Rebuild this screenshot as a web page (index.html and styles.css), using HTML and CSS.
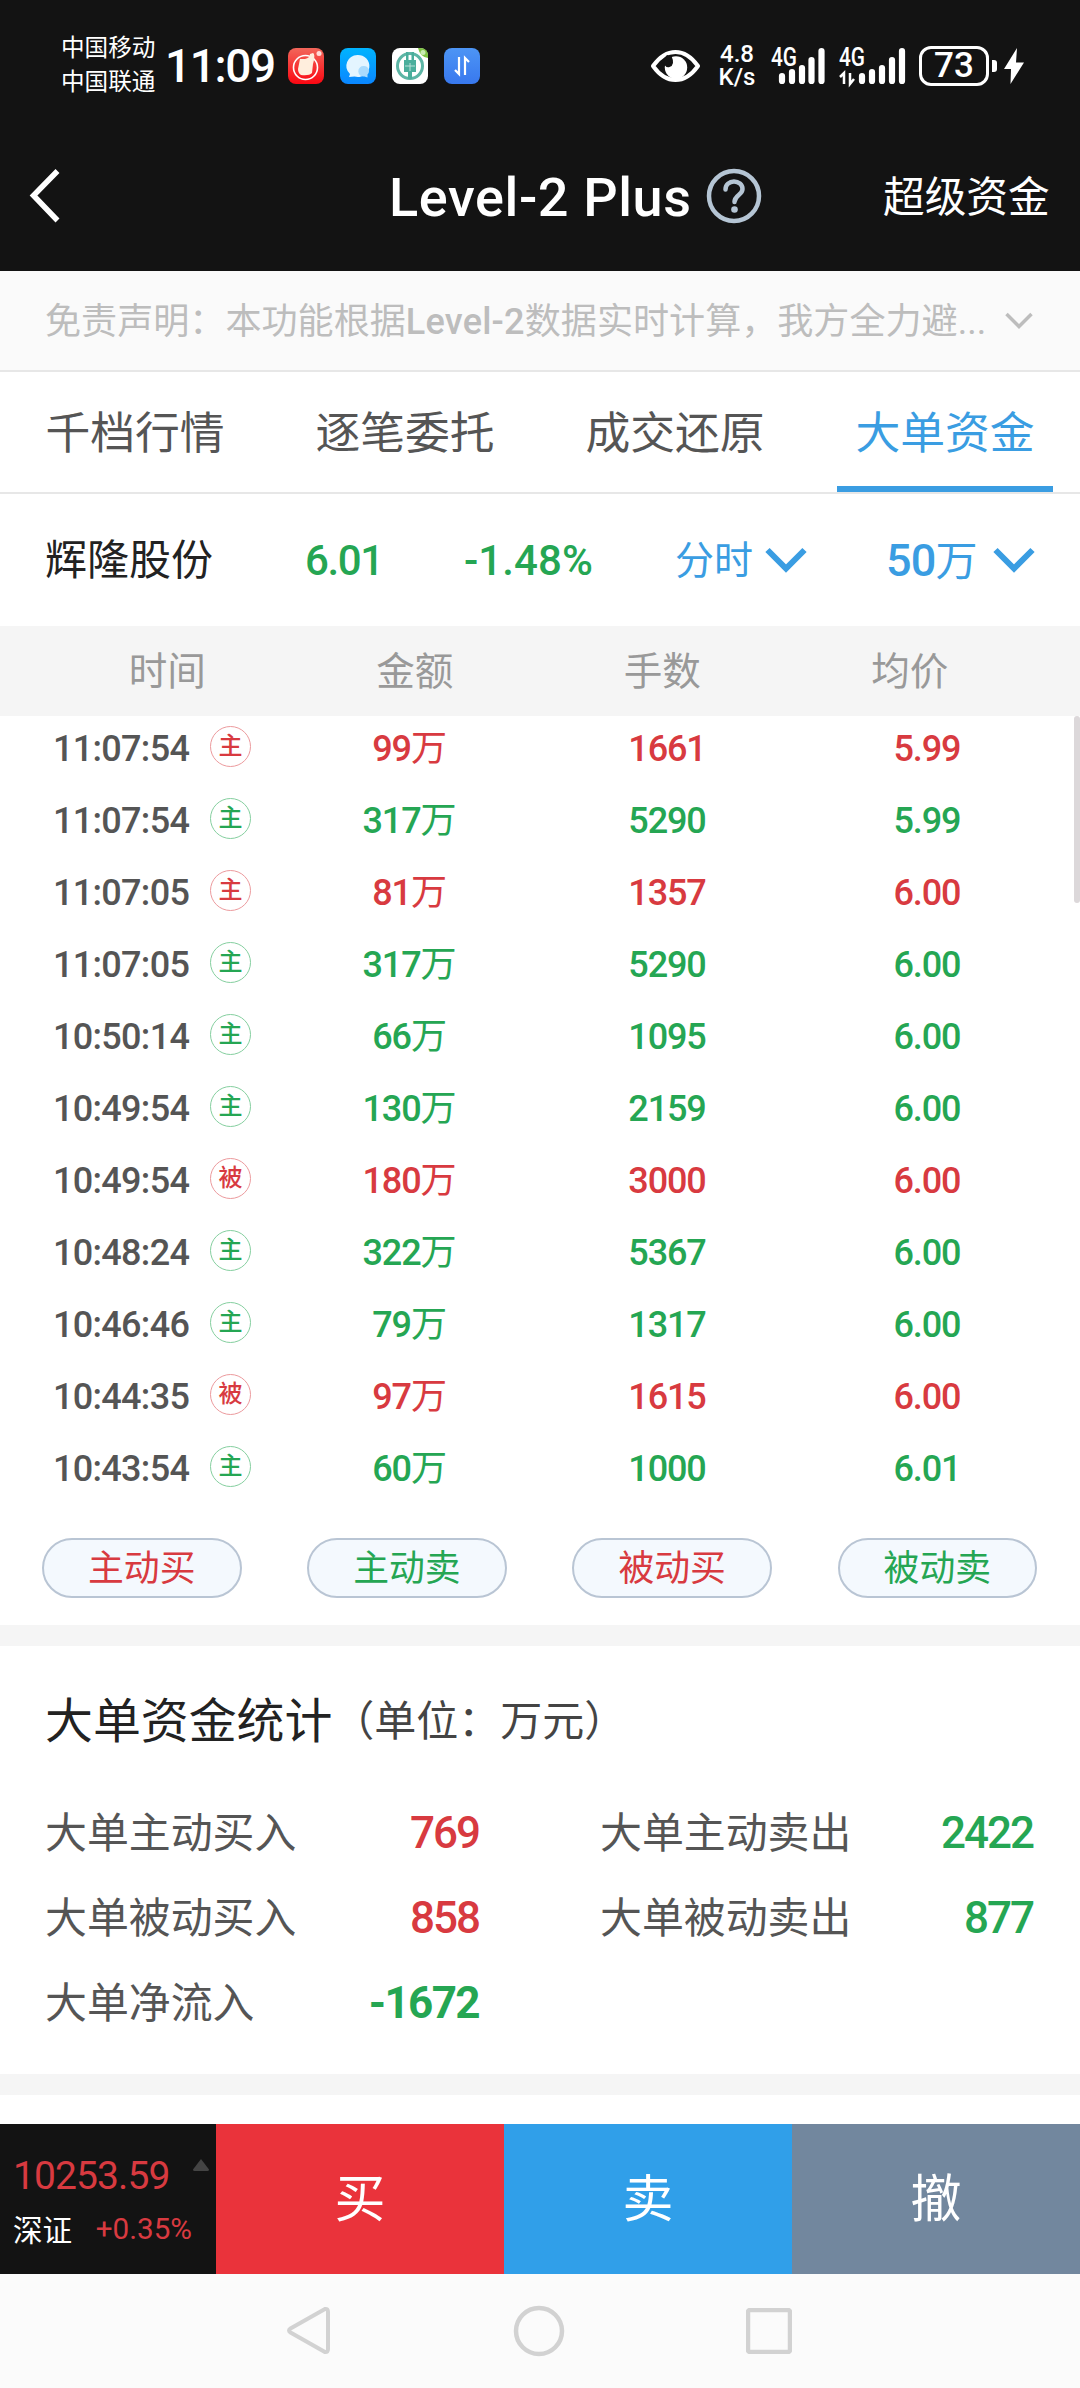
FILE: index.html
```html
<!DOCTYPE html>
<html lang="zh-CN">
<head>
<meta charset="utf-8">
<title>Level-2 Plus</title>
<link rel="stylesheet" href="styles.css">
</head>
<body>
<header class="top">
  <div class="status">
    <div class="carriers"><span>中国移动</span><span>中国联通</span></div>
    <div class="clock">11:09</div>
    <div class="apps">
      <svg width="36" height="36" viewBox="0 0 36 36"><defs><linearGradient id="r" x2="0" y2="1"><stop offset="0" stop-color="#f2665a"/><stop offset="1" stop-color="#fb0712"/></linearGradient></defs><rect width="36" height="36" rx="8" fill="url(#r)"/><circle cx="17.500" cy="19.500" r="12" fill="none" stroke="#fff" stroke-width="1.600"/><path d="M12 11h5q5-1 5-5l3-1q2 1 1 7l-1 4-1 9q-3 3-11 2-3-2-3-6z" fill="#ffeedd"/><circle cx="31" cy="5.500" r="2.500" fill="#ffdcd8"/></svg>
      <svg width="36" height="36" viewBox="0 0 36 36"><defs><linearGradient id="b" x2="0" y2="1"><stop offset="0" stop-color="#00b4ff"/><stop offset="1" stop-color="#0a86ff"/></linearGradient></defs><rect width="36" height="36" rx="8" fill="url(#b)"/><path d="M17.500 7a11.500 11 0 1 1-3 21.500L9 29l1-3A11.500 11 0 0 1 17.500 7z" fill="#e4f5ff"/><path d="M24 18a5 5 0 0 1 3.500 8.500v3l-3-1A5.300 5.300 0 1 1 24 18z" fill="#a9dbfd"/></svg>
      <svg width="36" height="36" viewBox="0 0 36 36"><rect width="36" height="36" rx="8" fill="#fff"/><path d="M26 0h2q8 0 8 8v2q-8-1-10-10z" fill="#7dc242"/><circle cx="31" cy="4.500" r="2.500" fill="#c8ebb0"/><circle cx="18" cy="18" r="12.500" fill="none" stroke="#5cb5a5" stroke-width="3"/><path d="M14 4h2.500v8h3V4H22v8h2v12h-4v7h-4v-7h-4V12h2z" fill="#4aae9c"/><path d="M13 18h10M18 15v8" stroke="#b8dfd8" stroke-width="1"/></svg>
      <svg width="36" height="36" viewBox="0 0 36 36"><defs><linearGradient id="c" x2="0" y2="1"><stop offset="0" stop-color="#4d95f5"/><stop offset="1" stop-color="#3878ee"/></linearGradient></defs><rect width="36" height="36" rx="8" fill="url(#c)"/><path d="M15 9v17l-4-4M21 27V10l4 4" fill="none" stroke="#fff" stroke-width="2.200"/></svg>
    </div>
    <div class="sys">
      <svg class="eye" width="49" height="34" viewBox="0 0 49 34"><path d="M2 17Q12 3 24.500 3T47 17Q37 31 24.500 31T2 17z" fill="none" stroke="#fff" stroke-width="4" stroke-linejoin="round"/><circle cx="25" cy="18.500" r="11.200" fill="#fff"/><path d="M20.500 7q4 9-2 11-3 1-5.500-2.500L10 13l6-7z" fill="#131313"/></svg>
      <div class="speed"><span>4.8</span><span>K/s</span></div>
      <svg class="signal" width="56" height="52" viewBox="0 -6 56 52"><text class="net" x="0" y="20" textLength="26" lengthAdjust="spacingAndGlyphs">4G</text><path d="M11 30v5M21 26v9M31 22v13M40.500 14v21M50.500 5v30" stroke="#fff" stroke-width="6.200" stroke-linecap="round"/></svg>
      <svg class="signal" width="68" height="52" viewBox="0 -6 68 52"><text class="net" x="0" y="20" textLength="26" lengthAdjust="spacingAndGlyphs">4G</text><path d="M1 31l4-4v11M11 27v11l4-5" fill="none" stroke="#fff" stroke-width="2.500"/><path d="M23 30v5M33 26v9M43 22v13M53 14v21M63 5v30" stroke="#fff" stroke-width="6.200" stroke-linecap="round"/></svg>
      <div class="battery">73</div>
      <i class="nub"></i>
      <svg width="20" height="36" viewBox="0 0 20 36"><path d="M13 0L0 21h7L6.500 36 20 14.500h-8z" fill="#fff"/></svg>
    </div>
  </div>
  <nav class="nav">
    <svg class="back" width="34" height="60" viewBox="0 0 34 60"><path d="M28.500 5L4.500 29.500l24 25" fill="none" stroke="#fff" stroke-width="5.500"/></svg>
    <h1>Level-2 Plus</h1>
    <svg class="help" width="56" height="56" viewBox="0 0 56 56"><circle cx="28" cy="28" r="25" fill="none" stroke="#b5c5d4" stroke-width="4.500"/><path d="M19.500 21.500c0-5 4-8 8.500-8s8.500 3 8.500 7.500c0 6-8 6-8 13" fill="none" stroke="#b5c5d4" stroke-width="4.500" stroke-linecap="round"/><circle cx="28.500" cy="41.500" r="3.300" fill="#b5c5d4"/></svg>
    <span class="super">超级资金</span>
  </nav>
</header>
<div class="notice"><p>免责声明：本功能根据<b>Level-2</b>数据实时计算，我方全力避...</p><svg width="28" height="18" viewBox="0 0 28 18"><path d="M1.500 2L14 14.500 26.500 2" fill="none" stroke="#bdbdbd" stroke-width="3.500"/></svg></div>
<div class="tabs"><div class="tab">千档行情</div><div class="tab">逐笔委托</div><div class="tab">成交还原</div><div class="tab active">大单资金</div></div>
<div class="stock">
  <span class="name">辉隆股份</span><span class="price">6.01</span><span class="change">-1.48%</span>
  <span class="pick pick-time">分时</span><svg width="42" height="26" viewBox="0 0 42 26"><path d="M2.500 3L21 21.500 39.500 3" fill="none" stroke="#3a9de2" stroke-width="6"/></svg>
  <span class="pick pick-size"><b>50</b>万</span><svg width="42" height="26" viewBox="0 0 42 26"><path d="M2.500 3L21 21.500 39.500 3" fill="none" stroke="#3a9de2" stroke-width="6"/></svg>
</div>
<div class="thead"><span>时间</span><span>金额</span><span>手数</span><span>均价</span></div>
<div class="list">
  <div class="rows">
    <div class="row red"><div class="time">11:07:54<i class="badge">主</i></div><span>99<em>万</em></span><span>1661</span><span>5.99</span></div>
    <div class="row green"><div class="time">11:07:54<i class="badge">主</i></div><span>317<em>万</em></span><span>5290</span><span>5.99</span></div>
    <div class="row red"><div class="time">11:07:05<i class="badge">主</i></div><span>81<em>万</em></span><span>1357</span><span>6.00</span></div>
    <div class="row green"><div class="time">11:07:05<i class="badge">主</i></div><span>317<em>万</em></span><span>5290</span><span>6.00</span></div>
    <div class="row green"><div class="time">10:50:14<i class="badge">主</i></div><span>66<em>万</em></span><span>1095</span><span>6.00</span></div>
    <div class="row green"><div class="time">10:49:54<i class="badge">主</i></div><span>130<em>万</em></span><span>2159</span><span>6.00</span></div>
    <div class="row red"><div class="time">10:49:54<i class="badge">被</i></div><span>180<em>万</em></span><span>3000</span><span>6.00</span></div>
    <div class="row green"><div class="time">10:48:24<i class="badge">主</i></div><span>322<em>万</em></span><span>5367</span><span>6.00</span></div>
    <div class="row green"><div class="time">10:46:46<i class="badge">主</i></div><span>79<em>万</em></span><span>1317</span><span>6.00</span></div>
    <div class="row red"><div class="time">10:44:35<i class="badge">被</i></div><span>97<em>万</em></span><span>1615</span><span>6.00</span></div>
    <div class="row green"><div class="time">10:43:54<i class="badge">主</i></div><span>60<em>万</em></span><span>1000</span><span>6.01</span></div>
  </div>
  <i class="scrollbar"></i>
</div>
<div class="filters"><span class="chip red">主动买</span><span class="chip green">主动卖</span><span class="chip red">被动买</span><span class="chip green">被动卖</span></div>
<section class="summary">
  <h2>大单资金统计<small>（单位：万元）</small></h2>
  <div class="stats">
    <span>大单主动买入</span><b class="red">769</b><span>大单主动卖出</span><b class="green">2422</b>
    <span>大单被动买入</span><b class="red">858</b><span>大单被动卖出</span><b class="green">877</b>
    <span>大单净流入</span><b class="green net-in">-1672</b>
  </div>
</section>
<footer class="actions">
  <div class="index">
    <div class="line"><span class="points">10253.59</span><svg width="18" height="14" viewBox="0 0 18 14"><path d="M9 1l8 10.500q0 1.500-1.500 1.500h-13Q1 13 1 11.500z" fill="#444"/></svg></div>
    <div class="line second"><span class="market">深证</span><span class="rate">+0.35%</span></div>
  </div>
  <div class="act buy">买</div><div class="act sell">卖</div><div class="act cancel">撤</div>
</footer>
<div class="sysnav">
  <svg width="46" height="52" viewBox="0 0 46 52"><path d="M39 4L4.500 23.500q-3 2 0 4L39 47q3 .5 3-3V7q0-3.500-3-3z" fill="none" stroke="#d2d2d2" stroke-width="4"/></svg>
  <svg width="52" height="52" viewBox="0 0 52 52"><circle cx="26" cy="26" r="23" fill="none" stroke="#d2d2d2" stroke-width="4.500"/></svg>
  <svg width="46" height="46" viewBox="0 0 46 46"><rect x="2" y="2" width="42" height="42" rx="2" fill="none" stroke="#d2d2d2" stroke-width="4.500"/></svg>
</div>
</body>
</html>
```
FILE: styles.css
```css
* { box-sizing: border-box; }
body { margin: 0; width: 1080px; height: 2388px; overflow: hidden; background: #fff; color: #555; font-family: Roboto, "Noto Sans CJK SC", sans-serif; white-space: nowrap; }
svg { display: block; flex: none; }
i, em { font-style: normal; }
em { font-weight: 400; }
.red { color: #d83a40; }
.green { color: #25a653; }

.top { height: 271px; background: #131313; color: #fff; }
.status { height: 131px; display: flex; align-items: center; }
.carriers { display: flex; flex-direction: column; width: 104px; margin-left: 61px; font-size: 23.6px; line-height: 34px; padding-bottom: 1px; }
.clock { width: 123px; font-size: 46px; line-height: 50px; font-weight: 500; letter-spacing: -1.4px; }
.apps { display: flex; gap: 16px; }
.sys { display: flex; align-items: center; margin-left: 171px; height: 40px; }
.speed { display: flex; flex-direction: column; align-items: center; width: 38px; margin: 0 15px 0 18px; font-size: 24px; line-height: 23px; font-weight: 500; }
.speed span { height: 23px; }
.signal { margin-right: 12px; }
.net { font: 500 25px Roboto, sans-serif; fill: #fff; }
.battery { width: 70px; height: 40px; border: 3px solid #fff; border-radius: 12px; font-size: 35px; line-height: 34px; font-weight: 500; text-align: center; }
.nub { width: 5px; height: 12px; margin: 0 7px 0 3px; border-radius: 0 3px 3px 0; background: #fff; }
.nav { display: flex; align-items: center; height: 130px; }
.back { margin-left: 29px; }
h1 { width: 314px; margin: 0 0 0 326px; padding-top: 3px; font-size: 54px; line-height: 60px; font-weight: 500; letter-spacing: 0.6px; }
.help { margin-left: 3px; }
.super { margin-left: 121px; padding-top: 3px; font-size: 41.7px; line-height: 60px; }

.notice { display: flex; align-items: center; height: 101px; padding-left: 45px; background: #fafafa; border-bottom: 2px solid #e7e7e7; color: #bdbdbd; font-size: 36.1px; }
.notice p { margin: 0; padding-top: 2px; width: 960px; line-height: 50px; }
.notice b { font-weight: 500; letter-spacing: 0.2px; }
.tabs { display: flex; height: 122px; border-bottom: 2px solid #e7e7e7; }
.tab { width: 216px; margin: 0 27px; text-align: center; font-size: 44.8px; line-height: 124px; height: 120px; }
.tab.active { color: #3a9de2; border-bottom: 6px solid #3a9de2; }
.stock { display: flex; align-items: center; height: 132px; padding-left: 45px; color: #25a653; font-size: 42px; line-height: 60px; }
.stock span { padding-top: 2px; }
.name { width: 260px; color: #222; }
.price { width: 159px; font-weight: 500; letter-spacing: -1.4px; }
.change { width: 211px; font-weight: 500; letter-spacing: 0.1px; }
.pick { color: #3a9de2; }
.pick-time { width: 90px; font-size: 39px; }
.pick-size { width: 107px; margin-left: 79px; font-size: 42px; }
.pick b { font-size: 45px; font-weight: 500; letter-spacing: -0.8px; }

.thead { display: grid; grid-template-columns: repeat(4, 247.5px); height: 90px; padding: 0 43.5px; background: #f5f5f5; color: #999; font-size: 38.6px; line-height: 92px; text-align: center; }
.list { display: flex; height: 792px; }
.rows { width: 1074px; margin-top: -3px; }
.row { display: grid; grid-template-columns: 280px 258px 258px 262px; align-items: center; height: 72px; font-size: 36px; line-height: 72px; font-weight: 500; letter-spacing: -1.1px; text-align: center; }
.time { display: flex; align-items: center; justify-content: space-between; padding: 0 29px 0 53px; color: #555; letter-spacing: -0.7px; font-weight: 500; }
.badge { width: 41px; height: 41px; border: 1.5px solid; border-radius: 50%; font-size: 24px; line-height: 38px; font-weight: 500; letter-spacing: 0; text-align: center; margin-top: -5px; }
.red .badge { color: #d83a40; border-color: #ec9a9d; }
.green .badge { color: #25a653; border-color: #85cf9f; }
.scrollbar { width: 6px; height: 187px; border-radius: 3px; background: #dcd8da; }
.filters { display: flex; gap: 65.7px; height: 117px; padding: 30px 42px 0; }
.chip { width: 199.5px; height: 60px; border: 2px solid #b9c5d4; border-radius: 30px; background: #f4f9fe; font-size: 35.8px; line-height: 58px; text-align: center; }

.summary { height: 470px; border-top: 21px solid #f5f5f5; border-bottom: 21px solid #f5f5f5; padding: 39px 45px 0 45px; }
h2 { margin: 0 0 32px; font-size: 47.9px; line-height: 74px; font-weight: 400; color: #222; }
small { font-size: 42px; color: #444; vertical-align: 2px; line-height: 1; }
.stats { display: grid; grid-template-columns: 277px 157px 297px 257px; font-size: 41.9px; line-height: 85px; }
.stats span:nth-of-type(even) { padding-left: 121px; }
.stats b { font-size: 44px; font-weight: 500; letter-spacing: -2px; text-align: right; }
.stats b.net-in { font-weight: 700; letter-spacing: -1.6px; }
.actions { display: flex; height: 150px; margin-top: 29px; }
.index { width: 216px; background: #131313; padding: 24px 6px 0 13px; }
.line { display: flex; align-items: center; justify-content: space-between; height: 54px; }
.points { padding-top: 2px; font-size: 39px; color: #d83a40; letter-spacing: -0.9px; }
.line svg { margin-top: -20px; }
.line.second { height: 53px; }
.market { font-size: 29.6px; color: #fff; }
.rate { font-size: 29.6px; color: #d83a40; margin-right: 18px; }
.act { width: 288px; color: #fff; font-size: 51px; line-height: 152px; text-align: center; }
.buy { background: #ea333b; }
.sell { background: #309fe9; }
.cancel { background: #72879e; }
.sysnav { display: flex; align-items: center; justify-content: space-between; height: 114px; padding: 0 288px 0 286px; background: #fbfbfb; }
```
